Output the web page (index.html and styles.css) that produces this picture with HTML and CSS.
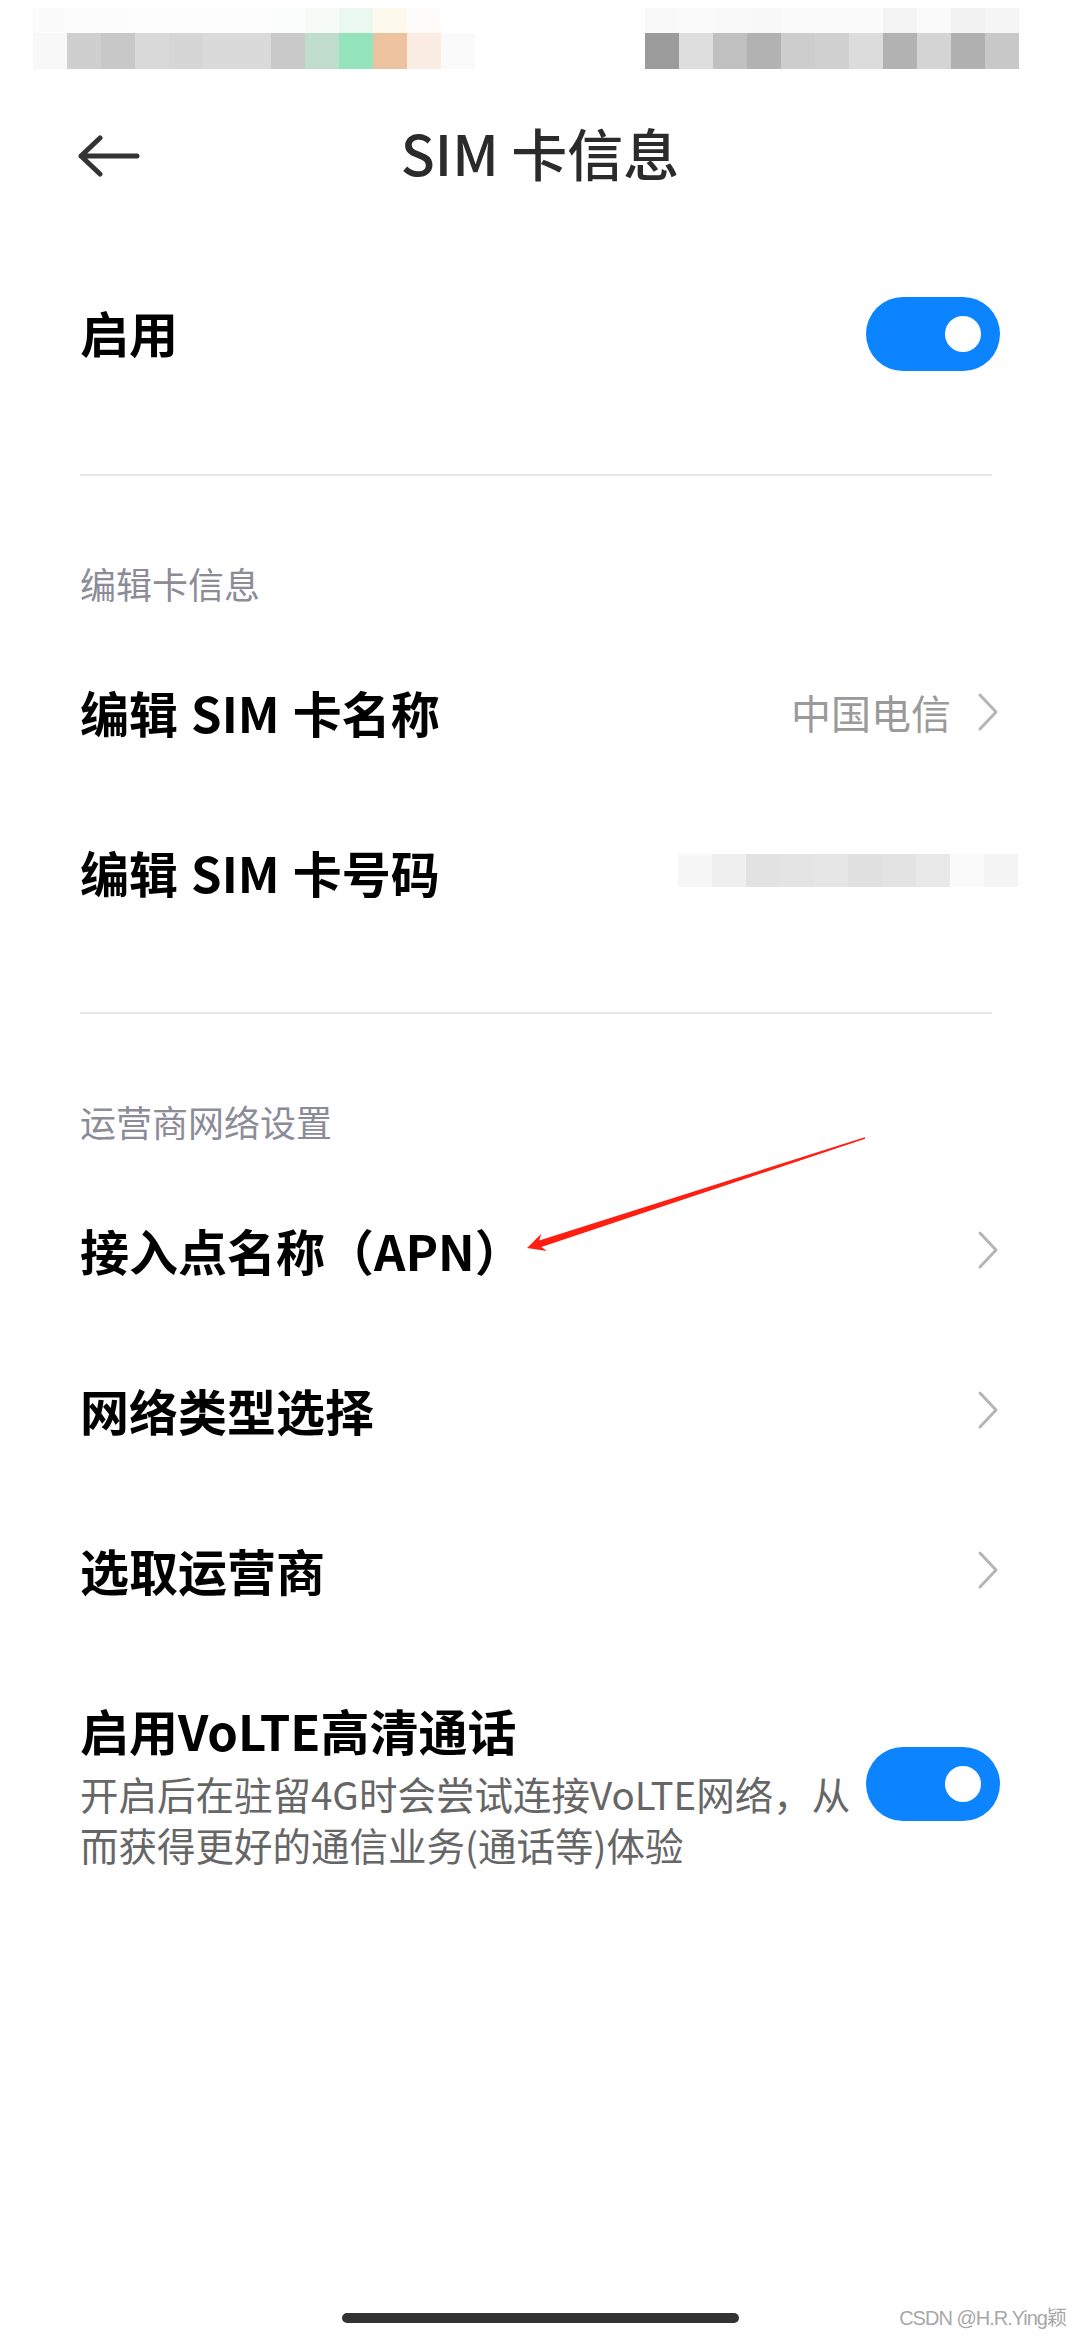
FILE: index.html
```html
<!DOCTYPE html>
<html lang="zh-CN">
<head>
<meta charset="utf-8">
<title>SIM 卡信息</title>
<link rel="stylesheet" href="styles.css">
</head>
<body>
<div class="screen">
  <!-- status bar (masked) -->
  <div class="status">
    <div class="mosaic mosaic-left">
      <div class="m-row faint">
        <i style="background:#fbfbfb"></i><i style="background:#fcfcfc"></i><i style="background:#fcfcfc"></i><i style="background:#fdfdfd"></i><i style="background:#fdfdfd"></i><i style="background:#fdfdfd"></i><i style="background:#fdfdfd"></i><i style="background:#fbfdfc"></i><i style="background:#f6fbf8"></i><i style="background:#eaf8f0"></i><i style="background:#fdf9ec"></i><i style="background:#fefcfa"></i><i style="background:#ffffff"></i>
      </div>
      <div class="m-row">
        <i style="background:#f8f8f8"></i><i style="background:#cfcfcf"></i><i style="background:#c8c8c8"></i><i style="background:#d9d9d9"></i><i style="background:#d6d6d6"></i><i style="background:#dadada"></i><i style="background:#dadada"></i><i style="background:#c9c9c9"></i><i style="background:#c0dccd"></i><i style="background:#93e4bd"></i><i style="background:#ecc29f"></i><i style="background:#fbece4"></i><i style="background:#fafafa"></i>
      </div>
    </div>
    <div class="mosaic mosaic-right">
      <div class="m-row faint">
        <i style="background:#f9f9f9"></i><i style="background:#fbfbfb"></i><i style="background:#f9f9f9"></i><i style="background:#f8f8f8"></i><i style="background:#fafafa"></i><i style="background:#fafafa"></i><i style="background:#fbfbfb"></i><i style="background:#f3f3f3"></i><i style="background:#fafafa"></i><i style="background:#f2f2f2"></i><i style="background:#f5f5f5"></i>
      </div>
      <div class="m-row">
        <i style="background:#9b9b9b"></i><i style="background:#dedede"></i><i style="background:#c0c0c0"></i><i style="background:#b2b2b2"></i><i style="background:#cdcdcd"></i><i style="background:#d0d0d0"></i><i style="background:#dcdcdc"></i><i style="background:#b2b2b2"></i><i style="background:#d4d4d4"></i><i style="background:#b0b0b0"></i><i style="background:#c8c8c8"></i>
      </div>
    </div>
  </div>

  <!-- app bar -->
  <header class="appbar">
    <div class="appbar-left">
      <svg class="back" width="62" height="42" viewBox="0 0 62 42" aria-hidden="true">
        <path d="M3 21 H59 M22 3 L3 21 L22 39" fill="none" stroke="#333" stroke-width="5" stroke-linecap="round" stroke-linejoin="round"/>
      </svg>
    </div>
    <h1 class="title">SIM 卡信息</h1>
    <div></div>
  </header>

  <div class="switch-row">
    <span class="label">启用</span>
    <span class="toggle"><span class="knob"></span></span>
  </div>
  <div class="divider divider-first"></div>

  <div class="section-title">编辑卡信息</div>
  <div class="item">
    <span class="label">编辑 SIM 卡名称</span>
    <span class="trail">
      <span class="value">中国电信</span>
      <svg class="chev" width="22" height="40" viewBox="0 0 22 40" aria-hidden="true"><path d="M3 3 L19 20 L3 37" fill="none" stroke="#b5b5b5" stroke-width="3" stroke-linecap="round" stroke-linejoin="round"/></svg>
    </span>
  </div>
  <div class="item">
    <span class="label">编辑 SIM 卡号码</span>
    <span class="mosaic-number">
      <i style="background:#f7f7f7"></i><i style="background:#efefef"></i><i style="background:#e2e2e2"></i><i style="background:#e4e4e4"></i><i style="background:#e6e6e6"></i><i style="background:#e1e1e1"></i><i style="background:#e3e3e3"></i><i style="background:#e8e8e8"></i><i style="background:#fafafa"></i><i style="background:#f4f4f4"></i>
    </span>
  </div>
  <div class="divider divider-second"></div>

  <div class="section-title">运营商网络设置</div>
  <div class="item">
    <span class="label">接入点名称（APN）</span>
    <svg class="chev" width="22" height="40" viewBox="0 0 22 40" aria-hidden="true"><path d="M3 3 L19 20 L3 37" fill="none" stroke="#b5b5b5" stroke-width="3" stroke-linecap="round" stroke-linejoin="round"/></svg>
  </div>
  <div class="item">
    <span class="label">网络类型选择</span>
    <svg class="chev" width="22" height="40" viewBox="0 0 22 40" aria-hidden="true"><path d="M3 3 L19 20 L3 37" fill="none" stroke="#b5b5b5" stroke-width="3" stroke-linecap="round" stroke-linejoin="round"/></svg>
  </div>
  <div class="item">
    <span class="label">选取运营商</span>
    <svg class="chev" width="22" height="40" viewBox="0 0 22 40" aria-hidden="true"><path d="M3 3 L19 20 L3 37" fill="none" stroke="#b5b5b5" stroke-width="3" stroke-linecap="round" stroke-linejoin="round"/></svg>
  </div>

  <div class="volte">
    <div class="volte-text">
      <div class="label volte-title">启用VoLTE高清通话</div>
      <div class="desc">开启后在驻留4G时会尝试连接VoLTE网络，从<br>而获得更好的通信业务(通话等)体验</div>
    </div>
    <span class="toggle toggle-volte"><span class="knob"></span></span>
  </div>

  <div class="home"><span class="home-bar"></span></div>

  <!-- red annotation arrow pointing at the APN entry -->
  <svg class="annotation" width="1080" height="2340" viewBox="0 0 1080 2340" aria-hidden="true">
    <polygon points="527,1248 541.3,1233.8 539.2,1240.4 864.8,1137.2 865.2,1138.8 541.4,1247 546.9,1251" fill="#ff1f12"/>
  </svg>

  <div class="watermark">CSDN @H.R.Ying颖</div>
</div>
</body>
</html>
```

FILE: styles.css
```css
* { box-sizing: border-box; }

html, body {
  margin: 0;
  padding: 0;
  background: #fff;
}

body {
  font-family: "Noto Sans CJK SC", "Noto Sans", sans-serif;
  color: #000;
}

.screen {
  position: relative;
  width: 1080px;
  height: 2340px;
  overflow: hidden;
  display: flex;
  flex-direction: column;
  background: #fff;
}

/* status bar */
.status {
  height: 97px;
  padding: 8px 61px 0 33px;
  display: flex;
  justify-content: space-between;
  align-items: flex-start;
}

.mosaic {
  display: flex;
  flex-direction: column;
}

.m-row {
  display: flex;
  height: 36px;
}

.m-row.faint {
  height: 25px;
}

.m-row i {
  display: block;
  width: 34px;
  height: 100%;
}

/* app bar */
.appbar {
  height: 112px;
  display: grid;
  grid-template-columns: 1fr auto 1fr;
  align-items: center;
}

.appbar-left {
  padding-left: 78px;
  padding-top: 6px;
  display: flex;
  align-items: center;
}

.back { display: block; }

.title {
  margin: 0 0 2px;
  font-size: 56px;
  font-weight: 500;
  color: #2b2b2b;
  line-height: 1;
  letter-spacing: 0;
}

/* rows */
.label {
  font-size: 49px;
  font-weight: 600;
  line-height: 60px;
  color: #000;
  white-space: nowrap;
}

.switch-row {
  height: 246px;
  padding: 0 80px;
  display: flex;
  align-items: center;
  justify-content: space-between;
}

.switch-row .toggle {
  margin-top: 4px;
}

.toggle {
  width: 134px;
  height: 74px;
  border-radius: 37px;
  background: #0d84ff;
  display: flex;
  align-items: center;
  justify-content: flex-end;
  padding-right: 19px;
  flex-shrink: 0;
}

.knob {
  width: 36px;
  height: 36px;
  border-radius: 50%;
  background: #fff;
}

.divider {
  height: 2px;
  background: #e6e6e6;
  margin: 0 88px 0 80px;
}

.divider-first { margin-top: 19px; }
.divider-second { margin-top: 60px; }

.section-title {
  padding: 82px 80px 24px;
  font-size: 36px;
  line-height: 50px;
  color: #8c8c99;
}

.item {
  height: 160px;
  padding: 0 81px 0 80px;
  display: flex;
  align-items: center;
  justify-content: space-between;
}

.item .label {
  word-spacing: 2px;
}

.trail {
  display: flex;
  align-items: center;
  gap: 26px;
}

.value {
  font-size: 40px;
  color: #9a9a9a;
  line-height: 1;
}

.chev { display: block; }

.mosaic-number {
  display: flex;
  height: 33px;
  margin-right: -19px;
  margin-bottom: 4px;
}

.mosaic-number i {
  display: block;
  width: 34px;
  height: 100%;
}

/* VoLTE row */
.volte {
  padding: 50px 80px 0;
  display: flex;
  align-items: flex-start;
  justify-content: space-between;
}

.volte-title {
  line-height: 60px;
}

.desc {
  margin-top: 8px;
  font-size: 38.5px;
  line-height: 51px;
  color: #666;
  white-space: nowrap;
}

.toggle-volte {
  margin-top: 47px;
}

/* navigation handle */
.home {
  margin-top: auto;
  padding-bottom: 17px;
  display: flex;
  justify-content: center;
}

.home-bar {
  width: 397px;
  height: 10px;
  border-radius: 5px;
  background: #333;
}

/* overlays */
.annotation {
  position: absolute;
  left: 0;
  top: 0;
  pointer-events: none;
}

.watermark {
  position: absolute;
  right: 14px;
  bottom: 9px;
  font-family: "Liberation Sans", sans-serif;
  font-size: 20px;
  letter-spacing: -1px;
  color: #a8a8a8;
}
```
